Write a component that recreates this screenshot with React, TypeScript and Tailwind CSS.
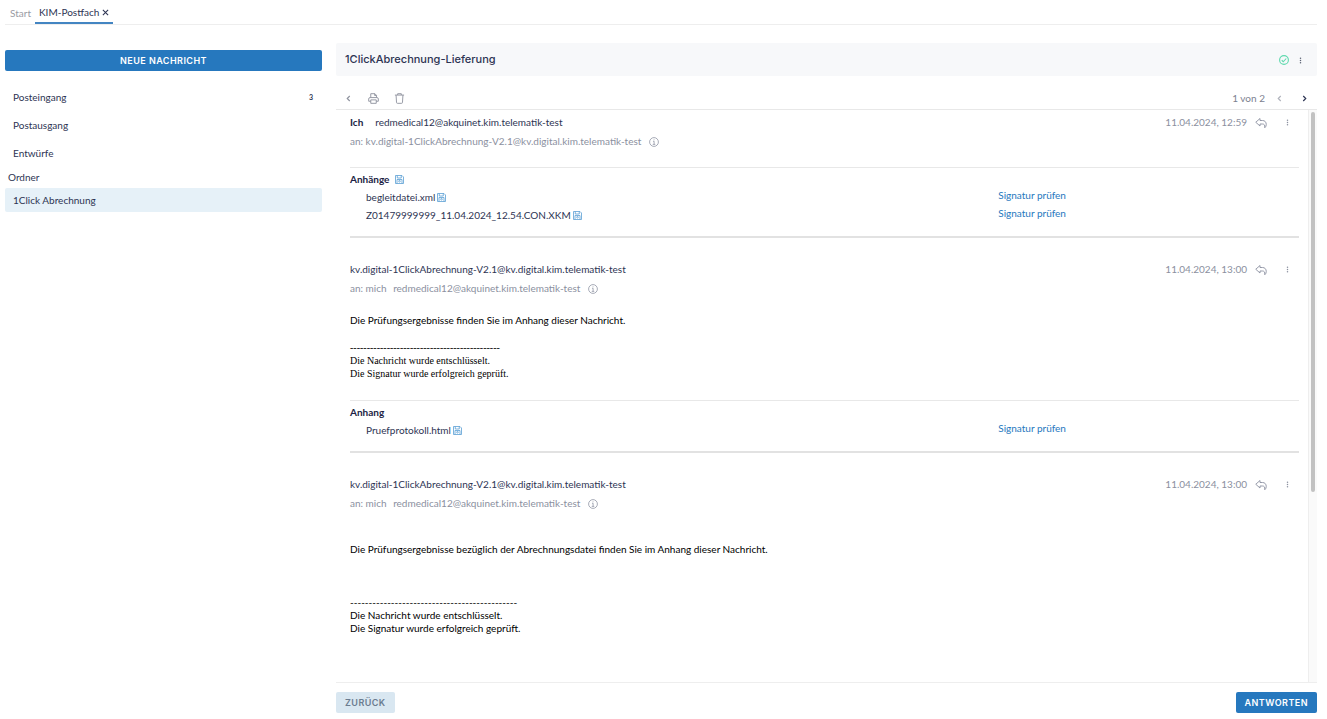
import type { ReactNode } from 'react';

type Attachment = { name: string };

type Mail = {
  id: number;
  from: ReactNode;
  to: ReactNode;
  date: string;
  body?: ReactNode;
  attachmentTitle?: string;
  saveAll?: boolean;
  attachments: Attachment[];
};

const FOLDERS = [
  { label: 'Posteingang', count: 3 },
  { label: 'Postausgang', count: null },
  { label: 'Entwürfe', count: null },
];

const DASHES = '-'.repeat(45);

const MAILS: Mail[] = [
  {
    id: 1,
    from: (
      <>
        <strong className="mr-3 font-bold text-[#1b2344]">Ich</strong>
        redmedical12@akquinet.kim.telematik-test
      </>
    ),
    to: <>an: kv.digital-1ClickAbrechnung-V2.1@kv.digital.kim.telematik-test</>,
    date: '11.04.2024, 12:59',
    attachmentTitle: 'Anhänge',
    saveAll: true,
    attachments: [
      { name: 'begleitdatei.xml' },
      { name: 'Z01479999999_11.04.2024_12.54.CON.XKM' },
    ],
  },
  {
    id: 2,
    from: 'kv.digital-1ClickAbrechnung-V2.1@kv.digital.kim.telematik-test',
    to: (
      <>
        an: mich <span className="ml-1">redmedical12@akquinet.kim.telematik-test</span>
      </>
    ),
    date: '11.04.2024, 13:00',
    body: (
      <div className="pt-4 pb-5">
        <p className="pb-3.5">Die Prüfungsergebnisse finden Sie im Anhang dieser Nachricht.</p>
        <div className="font-['Liberation_Serif',serif]">
          <p>{DASHES}</p>
          <p>Die Nachricht wurde entschlüsselt.</p>
          <p>Die Signatur wurde erfolgreich geprüft.</p>
        </div>
      </div>
    ),
    attachmentTitle: 'Anhang',
    attachments: [{ name: 'Pruefprotokoll.html' }],
  },
  {
    id: 3,
    from: 'kv.digital-1ClickAbrechnung-V2.1@kv.digital.kim.telematik-test',
    to: (
      <>
        an: mich <span className="ml-1">redmedical12@akquinet.kim.telematik-test</span>
      </>
    ),
    date: '11.04.2024, 13:00',
    body: (
      <div className="pt-[30px]">
        <p className="pb-10">
          Die Prüfungsergebnisse bezüglich der Abrechnungsdatei finden Sie im Anhang dieser Nachricht.
        </p>
        <p>{DASHES}</p>
        <p>Die Nachricht wurde entschlüsselt.</p>
        <p>Die Signatur wurde erfolgreich geprüft.</p>
      </div>
    ),
    attachments: [],
  },
];

function SaveIcon() {
  return (
    <svg viewBox="0 0 18 18" className="h-[9px] w-[9px]" fill="none" stroke="currentColor" strokeWidth="1.6" aria-hidden>
      <path d="M1 1h13l3 3v13H1z" />
      <path d="M4.5 1v5h8V1M4 17V9h10v8" />
      <circle cx="9" cy="12.5" r="1.6" />
    </svg>
  );
}

function PrintIcon() {
  return (
    <svg viewBox="0 0 24 24" className="h-[11px] w-[11px]" fill="none" stroke="currentColor" strokeWidth="2" strokeLinejoin="round" aria-hidden>
      <path d="M6 10V1.5h9L18.5 5v5M14.5 1.500V5.500h4" />
      <path d="M6 18H1.500v-5a3 3 0 0 1 3-3h15a3 3 0 0 1 3 3v5H18" />
      <path d="M6 15h12v7.500H6z" />
    </svg>
  );
}

function TrashIcon() {
  return (
    <svg viewBox="0 0 24 24" className="h-[11px] w-[11px]" fill="none" stroke="currentColor" strokeWidth="2" strokeLinejoin="round" aria-hidden>
      <path d="M2 4.500h20M4.500 4.500l1 16a2 2 0 0 0 2 2h9a2 2 0 0 0 2-2l1-16M8 4.500v-3h8v3" />
    </svg>
  );
}

function ReplyIcon() {
  return (
    <svg viewBox="0 0 24 24" className="h-3 w-3" fill="none" stroke="currentColor" strokeWidth="1.8" strokeLinejoin="round" aria-hidden>
      <path d="M10 3 1.500 10.500 10 18v-4h5c3 0 5 1.500 4.500 7.500 2-1.500 3-4 3-6.500 0-5-3-8-7.500-8h-5z" />
    </svg>
  );
}

function InfoIcon() {
  return (
    <svg viewBox="0 0 20 20" className="h-2.5 w-2.5" fill="none" stroke="currentColor" strokeWidth="1.5" aria-hidden>
      <circle cx="10" cy="10" r="8.8" />
      <path d="M8 8.500h2.200v6M7.500 14.800h5M9.300 5.500h1.600" />
    </svg>
  );
}

function CheckIcon() {
  return (
    <svg viewBox="0 0 20 20" className="h-2.5 w-2.5 text-[#5fd9ae]" fill="none" stroke="currentColor" strokeWidth="2.2" role="img" aria-label="Signatur gültig">
      <circle cx="10" cy="10" r="8.8" />
      <path d="m5.500 10.500 3 3 6-6.500" />
    </svg>
  );
}

function DotsIcon() {
  return (
    <svg viewBox="0 0 4 12" className="h-[7px] w-[3px]" fill="currentColor" aria-hidden>
      <circle cx="2" cy="2" r="1.3" />
      <circle cx="2" cy="6" r="1.3" />
      <circle cx="2" cy="10" r="1.3" />
    </svg>
  );
}

function Chevron({ right = false }: { right?: boolean }) {
  return (
    <svg viewBox="0 0 6 8" className="h-[7px] w-[5px]" fill="none" stroke="currentColor" strokeWidth="1.4" aria-hidden>
      <path d={right ? 'm1.500 1 3 3-3 3' : 'm4.500 1-3 3 3 3'} />
    </svg>
  );
}

function IconButton({ label, className = '', children }: { label: string; className?: string; children: ReactNode }) {
  return (
    <button type="button" aria-label={label} className={`flex shrink-0 items-center justify-center ${className}`}>
      {children}
    </button>
  );
}

function MailItem({ mail }: { mail: Mail }) {
  return (
    <article>
      <header className="flex justify-between">
        <div className="min-w-0">
          <p className="leading-[19px]">{mail.from}</p>
          <p className="flex items-center gap-2 leading-[19px] text-[#8b90a0]">
            <span>{mail.to}</span>
            <IconButton label="Empfängerdetails">
              <InfoIcon />
            </IconButton>
          </p>
        </div>
        <div className="flex h-[19px] shrink-0 items-center pr-1 text-[#8b90a0]">
          <time className="mr-2">{mail.date}</time>
          <IconButton label="Antworten" className="mr-3">
            <ReplyIcon />
          </IconButton>
          <IconButton label="Weitere Aktionen" className="w-4">
            <DotsIcon />
          </IconButton>
        </div>
      </header>
      {mail.body ? (
        <div className="leading-[13px] text-black">{mail.body}</div>
      ) : (
        <div className="h-4" />
      )}
      {mail.attachments.length > 0 && (
        <section className="mb-[22px] border-t border-b-2 border-t-[#e8e8e8] border-b-[#e2e2e2] pt-0.5 pb-3">
          <h2 className="flex items-center gap-1.5 leading-[18px] font-bold text-[#1b2344]">
            {mail.attachmentTitle}
            {mail.saveAll && (
              <IconButton label="Alle Anhänge speichern" className="text-[#5a9fd4]">
                <SaveIcon />
              </IconButton>
            )}
          </h2>
          <ul>
            {mail.attachments.map((a) => (
              <li key={a.name} className="grid grid-cols-[633fr_301fr] pl-4 leading-[18px]">
                <span className="flex items-center gap-0.5">
                  {a.name}
                  <IconButton label={`${a.name} speichern`} className="text-[#5a9fd4]">
                    <SaveIcon />
                  </IconButton>
                </span>
                <a href="#signatur" className="leading-[14px] text-[#2678be]">
                  Signatur prüfen
                </a>
              </li>
            ))}
          </ul>
        </section>
      )}
    </article>
  );
}

export default function App() {
  return (
    <div className="flex h-screen flex-col bg-white pr-2.5 pb-1.5 pl-[5px] font-[Lato,sans-serif] text-[10px] text-[#2d3453]">
      <nav className="flex h-[25px] shrink-0 items-stretch border-b border-[#eeeeee] pl-[5px]">
        <a href="#start" className="flex items-center pt-0.5 text-[#9a9ba3]">
          Start
        </a>
        <div className="ml-1 flex items-center gap-[3px] border-b-2 border-[#4385c2] px-1 pt-0.5">
          <a href="#postfach">KIM-Postfach</a>
          <IconButton label="Tab schließen">
            <svg viewBox="0 0 8 8" className="h-[7px] w-[7px]" stroke="currentColor" strokeWidth="1.2" aria-hidden>
              <path d="m1 1 6 6M7 1 1 7" />
            </svg>
          </IconButton>
        </div>
      </nav>

      <div className="grid min-h-0 flex-1 grid-cols-[317fr_981fr] gap-x-3.5 pt-[18px]">
        <aside className="pt-[7px]">
          <button
            type="button"
            className="h-[21px] w-full rounded-xs bg-[#2678be] font-[Inter,sans-serif] text-[9px] font-semibold tracking-wider text-white"
          >
            NEUE NACHRICHT
          </button>
          <ul className="pt-3">
            {FOLDERS.map((f) => (
              <li key={f.label}>
                <a href="#ordner" className="flex h-7 items-center justify-between pr-[9px] pl-2">
                  {f.label}
                  {f.count && <span className="text-[7px] font-bold">{f.count}</span>}
                </a>
              </li>
            ))}
          </ul>
          <h2 className="pl-[3px] leading-[21px]">Ordner</h2>
          <a href="#abrechnung" className="flex h-6 items-center rounded-xs bg-[#e6f1f8] pl-2">
            1Click Abrechnung
          </a>
        </aside>

        <main className="flex min-h-0 min-w-0 flex-col">
          <div className="flex h-[33px] shrink-0 items-center rounded-xs bg-[#f7f8fa] pr-[15px] pl-[9px]">
            <h1 className="flex-1 font-[Inter,sans-serif] text-[11px] font-medium">1ClickAbrechnung-Lieferung</h1>
            <CheckIcon />
            <IconButton label="Weitere Aktionen" className="ml-2.5 pt-0.5 text-[#5c6274]">
              <DotsIcon />
            </IconButton>
          </div>

          <div className="flex h-[34px] shrink-0 items-end border-b border-[#e8e8e8] px-2.5 pb-[3px] text-[#7c8190]">
            <div className="flex h-4 flex-1 items-center text-[#8f939f]">
              <IconButton label="Zurück" className="mr-[17px]">
                <Chevron />
              </IconButton>
              <IconButton label="Drucken" className="mr-[15px]">
                <PrintIcon />
              </IconButton>
              <IconButton label="Löschen">
                <TrashIcon />
              </IconButton>
            </div>
            <div className="flex h-4 items-center">
              <span className="mr-3">1 von 2</span>
              <IconButton label="Vorherige Nachricht" className="mr-5 text-[#b0b3bc]">
                <Chevron />
              </IconButton>
              <IconButton label="Nächste Nachricht" className="text-[#2d3453]">
                <Chevron right />
              </IconButton>
            </div>
          </div>

          <div className="flex min-h-0 flex-1 border-b border-[#eeeeee]">
            <div className="min-w-0 flex-1 overflow-hidden pt-[3px] pr-[9px] pl-3.5">
              {MAILS.map((m) => (
                <MailItem key={m.id} mail={m} />
              ))}
            </div>
            <div className="w-[9px] shrink-0 border-l border-[#eeeeee] bg-[#fafafa] px-0.5 pt-0.5">
              <div className="h-2/3 rounded-full bg-[#c2c2c2]" />
            </div>
          </div>

          <footer className="flex shrink-0 items-center justify-between pt-[9px] font-[Inter,sans-serif] text-[9px] font-semibold tracking-wider">
            <button type="button" className="h-[21px] rounded-xs bg-[#d9e7f1] px-[9px] text-[#6b7c90]">
              ZURÜCK
            </button>
            <button type="button" className="h-[21px] rounded-xs bg-[#2678be] px-[9px] text-white">
              ANTWORTEN
            </button>
          </footer>
        </main>
      </div>
    </div>
  );
}
